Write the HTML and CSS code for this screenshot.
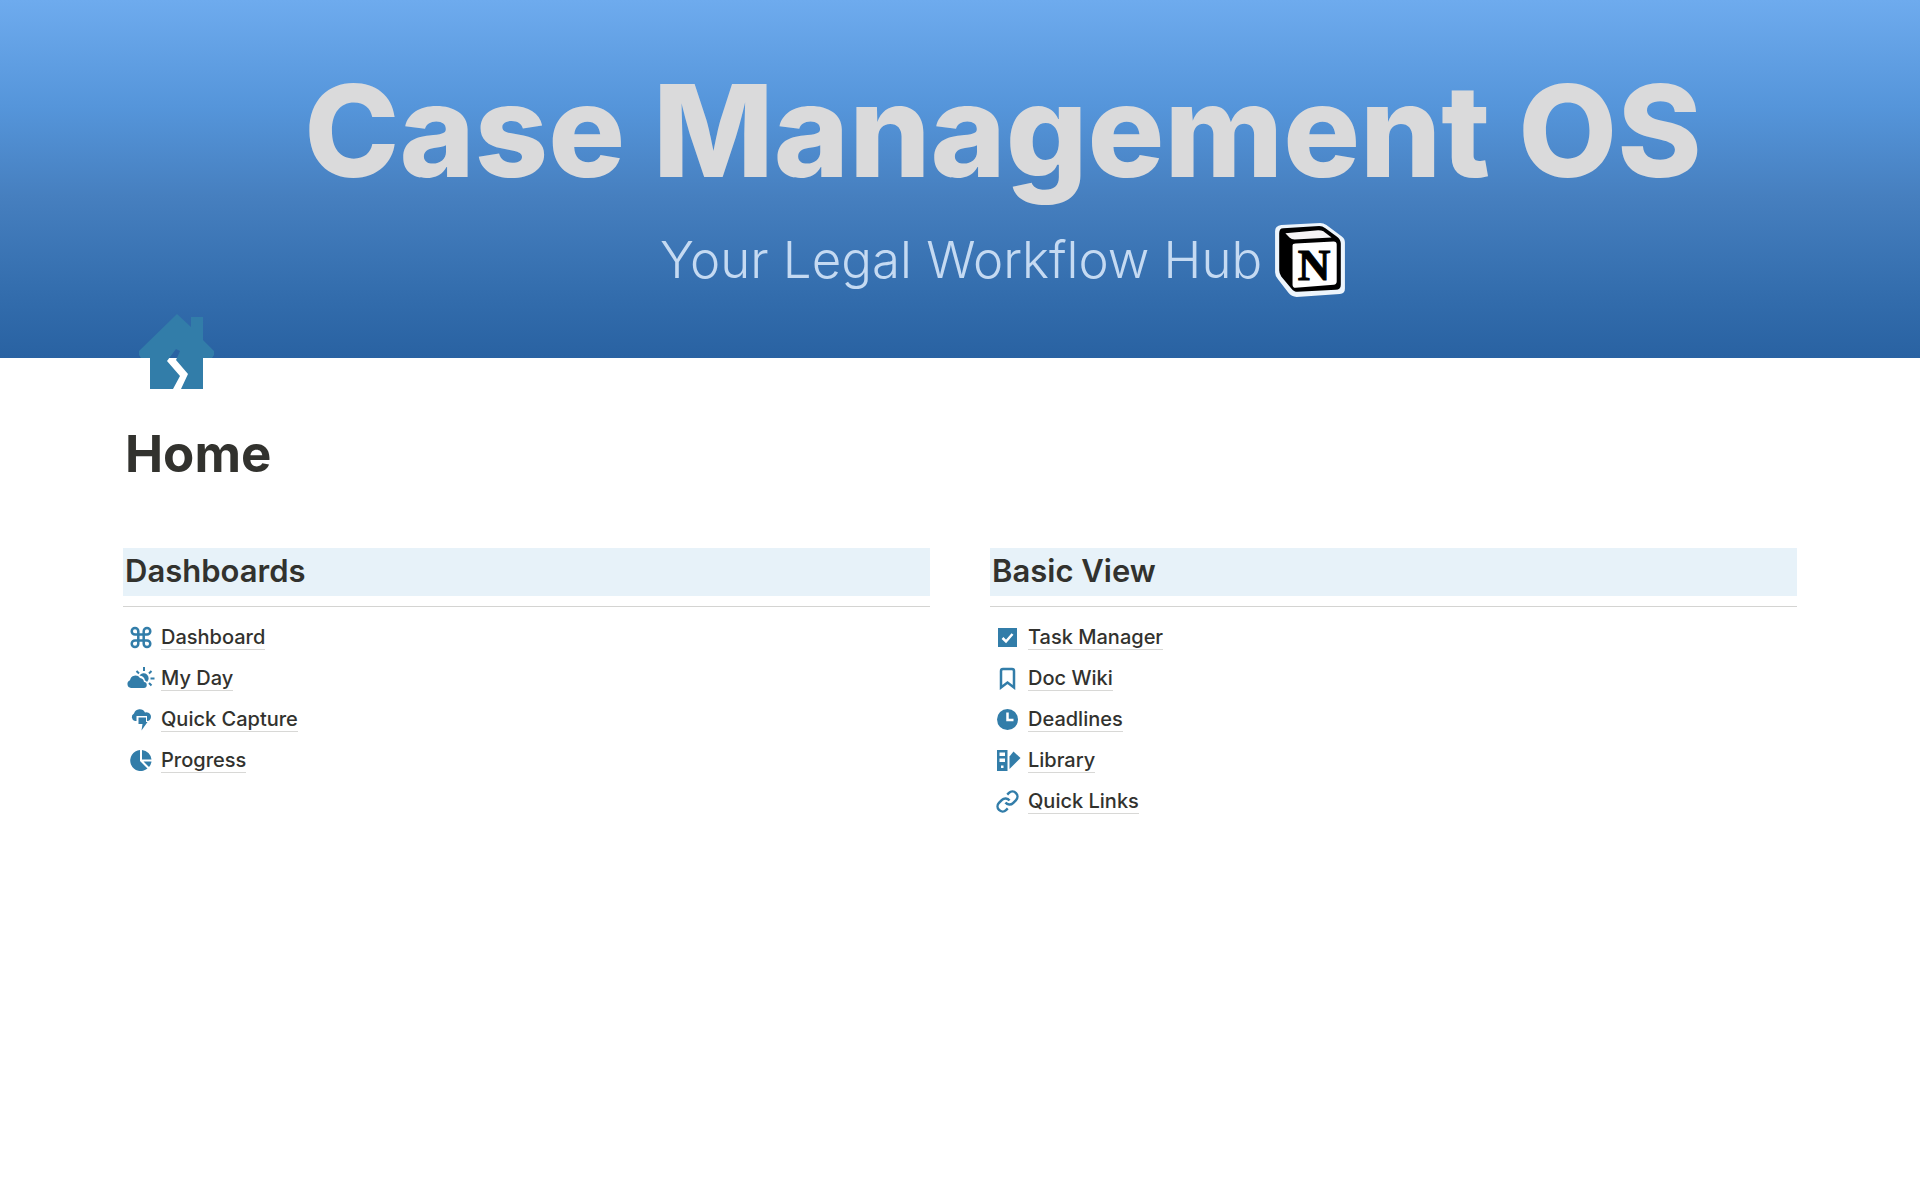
FILE: index.html
```html
<!DOCTYPE html>
<html lang="en">
  <head>
    <meta charset="UTF-8" />
    <meta name="viewport" content="width=device-width, initial-scale=1.0" />
    <link rel="stylesheet" href="styles.css">
    <title>Home | Case Management OS</title>
  </head>
  <body>
    <header class="cover">
      <div class="cover-title">Case Management OS</div>
      <div class="cover-subtitle">
        <span>Your Legal Workflow Hub</span>
        <svg class="cover-logo" viewBox="0 0 70 74" aria-hidden="true">
          <path d="M7 3 45 1Q48 1 51 3L66 14Q69 16 69 20V65Q69 70 64 70L22 73Q17 73 14 69L4 56Q1 53 1 49V9Q1 4 7 3Z" fill="#edf5fc" />
          <path d="M9 6 44 4Q47 4 50 6L61 14Q65 17 65 21V61Q65 66 60 66L23 68Q19 68 17 65L7 53Q5 50 5 47V11Q5 6 9 6Z" fill="#000" />
          <path d="M11 11 43 8Q46 8 48 9L56 15 20 17Q17 17 15 15Z" fill="#f6f4f5" />
          <path d="M18 23Q18 21 21 21L58 19Q61 19 61 22V58Q61 61 58 61L21 64Q18 64 18 61Z" fill="#fff" />
          <text x="39" y="56" text-anchor="middle" class="logo-letter">N</text>
        </svg>
      </div>
    </header>

    <main class="page">
      <svg class="page-icon" viewBox="0 0 76 76" aria-hidden="true">
        <path d="M39 0 53 13V3H65V26L76 37V41L74 44H65V75H43L50 60 38 46 42 37 38 35 29 47 42 62 35 75H12V44H3L1 41V37Z" />
      </svg>
      <h1>Home</h1>

      <div class="columns">
        <section>
          <h2>Dashboards</h2>
          <ul class="links">
            <li>
              <a href="#dashboard">
                <svg viewBox="0 0 28 24"><path class="line" transform="translate(2 .5)" d="M18 2.500a3.300 3.300 0 0 0-3.300 3.300v12.400a3.300 3.300 0 1 0 3.300-3.300H6a3.300 3.300 0 1 0 3.300 3.300V5.800A3.300 3.300 0 1 0 6 9.100h12a3.300 3.300 0 0 0 0-6.600z" /></svg>
                <span>Dashboard</span>
              </a>
            </li>
            <li>
              <a href="#my-day">
                <svg viewBox="0 0 28 24">
                  <path d="M4 22a4 4 0 0 1-1-7.700A5.500 5.500 0 0 1 13 12a4.500 4.500 0 0 1 4 4 3 3 0 0 1-.5 6z" />
                  <path d="M12.500 9.500a5 5 0 1 1 7.500 6.500 5 5 0 0 0-2-1.500 6 6 0 0 0-5.500-5z" />
                  <path class="ray" d="M17 1v4M9.500 5l2.500 2.500M24.500 5l-2.500 2.500M23.500 12.500h4M22 17l2.500 2.500" />
                </svg>
                <span>My Day</span>
              </a>
            </li>
            <li>
              <a href="#quick-capture">
                <svg viewBox="0 0 28 24">
                  <path d="M8 14a4 4 0 0 1-1-7.500 6 6 0 0 1 11-1 4.500 4.500 0 0 1 3 8.500H20V9H9.500v5z" />
                  <path d="M11.500 10.500H19v4.500h1.500l-6 8.500 1-6.500h-4z" />
                </svg>
                <span>Quick Capture</span>
              </a>
            </li>
            <li>
              <a href="#progress">
                <svg viewBox="0 0 28 24">
                  <path d="M13 2v11l7.500 7.500A10.500 10.500 0 1 1 13 2z" />
                  <path d="M15 2a10.500 10.500 0 0 1 9.500 9.500H15zM16.500 13.500h8a10 10 0 0 1-2.500 5.500z" />
                </svg>
                <span>Progress</span>
              </a>
            </li>
          </ul>
        </section>

        <section>
          <h2>Basic View</h2>
          <ul class="links">
            <li>
              <a href="#task-manager">
                <svg viewBox="0 0 28 24"><path d="M4 3h19v19H4z" /><path class="tick" d="M8.500 13l3.500 3.500 6.500-7.500" /></svg>
                <span>Task Manager</span>
              </a>
            </li>
            <li>
              <a href="#doc-wiki">
                <svg viewBox="0 0 28 24"><path class="line" d="M7 21.500V5q0-2 2-2h9q2 0 2 2v16.500l-6.500-5z" /></svg>
                <span>Doc Wiki</span>
              </a>
            </li>
            <li>
              <a href="#deadlines">
                <svg viewBox="0 0 28 24"><circle cx="13.500" cy="12.500" r="10.500" /><path class="hand" d="M13.500 5.500v7.500h6" /></svg>
                <span>Deadlines</span>
              </a>
            </li>
            <li>
              <a href="#library">
                <svg viewBox="0 0 28 24">
                  <path fill-rule="evenodd" d="M3 2h10.500v21H3zM5.500 4.500v3.500H11V4.500zM5.500 10.500V14H11v-3.500zM7 17.500v2.500h2.500v-2.500z" />
                  <path d="M15.500 8.500l4-5 7 6.500-11 11z" />
                </svg>
                <span>Library</span>
              </a>
            </li>
            <li>
              <a href="#quick-links">
                <svg viewBox="0 0 28 24"><path class="line" transform="translate(1.500 .5)" d="M10 13a5 5 0 0 0 7.540.54l3-3a5 5 0 0 0-7.070-7.070l-1.720 1.710M14 11a5 5 0 0 0-7.540-.54l-3 3a5 5 0 0 0 7.070 7.070l1.710-1.710" /></svg>
                <span>Quick Links</span>
              </a>
            </li>
          </ul>
        </section>
      </div>
    </main>
  </body>
</html>
```
FILE: styles.css
```css
*,
*::after,
*::before {
  box-sizing: border-box;
}

:root {
  --ink: #32322e;
  --accent: #327da9;
}

body {
  margin: 0;
  background-color: white;
  color: var(--ink);
  font-family: Inter, "Liberation Sans", sans-serif;
}

.cover {
  height: 358px;
  padding: 58px 0 0 86px;
  display: flex;
  flex-direction: column;
  align-items: center;
  background: linear-gradient(#6eabee, #5595da 30%, #467fbf 55%, #336dad 82%, #2962a2);
  white-space: nowrap;
}

.cover-title {
  color: #dadadb;
  font-size: 128px;
  font-weight: 800;
  line-height: 146px;
}

.cover-subtitle {
  margin-top: 18px;
  display: flex;
  align-items: center;
  gap: 12px;
  color: #c5daf2;
  font-size: 51px;
  font-weight: 300;
  line-height: 76px;
}

.cover-logo {
  width: 72px;
  height: 76px;
}

.logo-letter {
  fill: black;
  stroke: black;
  font-family: "Liberation Serif", serif;
  font-size: 44px;
  font-weight: 700;
}

.page {
  padding: 0 123px;
}

.page-icon {
  display: block;
  position: relative;
  width: 76px;
  height: 76px;
  margin: -44px 0 0 15px;
  fill: var(--accent);
}

h1 {
  margin: 34px 0 0 2px;
  font-size: 51px;
  font-weight: 700;
  line-height: 60px;
}

.columns {
  margin-top: 64px;
  display: grid;
  grid-template-columns: 1fr 1fr;
  gap: 60px;
}

h2 {
  margin: 0 0 10px;
  padding: 0 2px 2px;
  background-color: #e7f2f9;
  font-size: 31px;
  font-weight: 600;
  line-height: 46px;
}

.links {
  margin: 0;
  padding: 9px 4px;
  border-top: 1px solid #d4d4d2;
  list-style: none;
}

.links li {
  height: 41px;
}

.links a {
  display: inline-flex;
  align-items: center;
  gap: 6px;
  height: 41px;
  color: var(--ink);
  font-size: 20px;
  font-weight: 500;
  line-height: 24px;
  text-decoration: none;
}

.links a:hover {
  color: var(--accent);
}

.links span {
  padding-top: 2px;
  border-bottom: 1px solid #d8d8d6;
}

.links svg {
  width: 28px;
  height: 24px;
  fill: var(--accent);
}

.links .line,
.links .ray,
.links .tick,
.links .hand {
  fill: none;
  stroke: var(--accent);
  stroke-width: 2.5;
}

.links .ray {
  stroke-width: 2;
}

.links .tick,
.links .hand {
  stroke: white;
}
```
